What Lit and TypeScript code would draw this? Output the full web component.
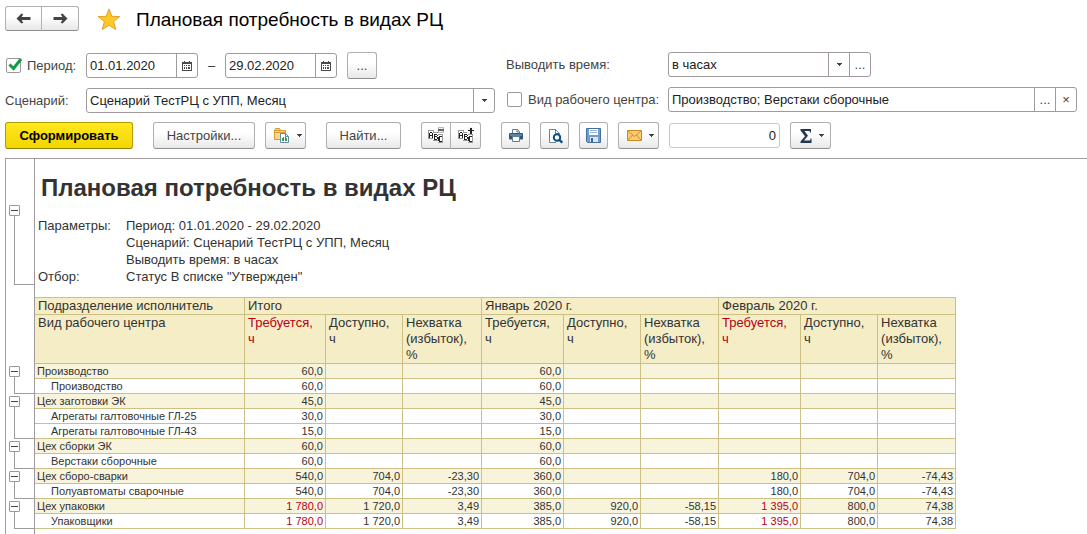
import { LitElement, html, svg, css, nothing } from "lit";
import { customElement, state } from "lit/decorators.js";
import { classMap } from "lit/directives/class-map.js";

interface Row {
  name: string;
  values: string[];
  red?: number[];
}

const COLUMNS = ["Требуется, ч", "Доступно, ч", "Нехватка (избыток), %"];
const PERIODS = [
  { title: "Итого", over: true },
  { title: "Январь 2020 г.", over: false },
  { title: "Февраль 2020 г.", over: true },
];
const WIDTHS = [30, 210, 81, 77, 79, 82, 77, 78, 82, 77, 78];

const only = (v: string) => [v, "", "", v, "", "", "", "", ""];
const WELD = ["540,0", "704,0", "-23,30", "360,0", "", "", "180,0", "704,0", "-74,43"];
const PACK = ["1 780,0", "1 720,0", "3,49", "385,0", "920,0", "-58,15", "1 395,0", "800,0", "74,38"];

const GROUPS: Row[][] = [
  [
    { name: "Производство", values: only("60,0") },
    { name: "Производство", values: only("60,0") },
  ],
  [
    { name: "Цех заготовки ЭК", values: only("45,0") },
    { name: "Агрегаты галтовочные ГЛ-25", values: only("30,0") },
    { name: "Агрегаты галтовочные ГЛ-43", values: only("15,0") },
  ],
  [
    { name: "Цех сборки ЭК", values: only("60,0") },
    { name: "Верстаки сборочные", values: only("60,0") },
  ],
  [
    { name: "Цех сборо-сварки", values: WELD },
    { name: "Полуавтоматы сварочные", values: WELD },
  ],
  [
    { name: "Цех упаковки", values: PACK, red: [0, 6] },
    { name: "Упаковщики", values: PACK, red: [0, 6] },
  ],
];

const caret = html`<svg class="caret" width="5" height="3" viewBox="0 0 5 3"><path d="M0 0h5v1h-1v1h-1v1h-1v-1h-1v-1h-1z" fill="#444"/></svg>`;

const calendar = html`<svg width="10" height="10" viewBox="0 0 10 10" shape-rendering="crispEdges">
  <path d="M2 0h1v1h4v-1h1v1h2v9h-10v-9h2z" fill="#4a4a4a"/>
  <path d="M1 3h8v6h-8z" fill="#fff"/>
  <path d="M2 4h1v1h-1zM4 4h1v1h-1zM6 4h2v1h-2zM2 6h1v2h-1zM4 6h1v2h-1zM6 6h2v2h-2z" fill="#4a4a4a"/>
</svg>`;

const arrow = (right: boolean) => html`<svg width="15" height="11" viewBox="0 0 15 11">
  <g transform=${right ? "translate(15 0) scale(-1 1)" : "translate(0 0)"}>
    <path d="M0.5 5.5 5.5 0.5 7.3 1.2 5.6 4H14.5V7H5.6L7.3 9.8 5.500 10.500Z" fill="#444"/>
  </g></svg>`;

const star = html`<svg width="24" height="23" viewBox="0 0 24 23">
  <path d="M12 1 14.8 8.3 22.8 8.6 16.6 13.6 18.8 21.6 12 17.2 5.2 21.6 7.4 13.6 1.2 8.6 9.2 8.3Z" fill="#fdc724" stroke="#dfa32c" stroke-width="1"/>
</svg>`;

const folderIcon = html`<svg width="17" height="17" viewBox="0 0 17 17">
  <path d="M1.5 12.5V3.5L2.5 1.5H6.5L7.5 3.5H12.5V5.5" fill="#f6cf7c" stroke="#d99a32"/>
  <path d="M1.5 12.5V3.5H12.5V12.5Z" fill="#f9d98f" stroke="#d99a32"/>
  <path d="M1.5 5.5H12" stroke="#d99a32"/>
  <path d="M7.5 6.5H12.5L15.5 9.5V15.5H7.5Z" fill="#fff" stroke="#6b86a4"/>
  <path d="M12.5 6.5V9.5H15.5" fill="none" stroke="#6b86a4"/>
  <path d="M9 11h1v3h-1zM13 11h1v3h-1z" fill="#3fa45b"/><path d="M10 10h1v4h-1zM12 10h1v4h-1z" fill="#e03a3a"/>
</svg>`;

const groupIcon = (plus: boolean) => html`<svg width="16" height="17" viewBox="0 0 16 17" shape-rendering="crispEdges">
  <path d="M0 3h6v9h-6z" fill="#999"/><path d="M1 4h4v7h-4z" fill="#fff"/>
  <path d="M2 5h2v1h1v5h-1v-2h-2v2h-1v-5h1zM2 6v2h2v-2z" fill="#222" fill-rule="evenodd"/>
  <path d="M5 5h5v9h-5z" fill="#999"/><path d="M5 6h5v7h-5z" fill="#fff"/>
  <path d="M6 7h3v1h1v1h-1v1h1v2h-1v1h-3zM7 8v1h2v-1zM7 10v2h2v-2z" fill="#222" fill-rule="evenodd"/>
  <path d="M10 7h5v9h-5z" fill="#999"/><path d="M10 8h4v7h-4z" fill="#fff"/>
  <path d="M11 9h3v1h-2v4h2v1h-3v-1h-1v-4h1z" fill="#222"/>
  ${plus
    ? svg`<path d="M9 0h7v7h-7z" fill="#f6f6f6"/><path d="M10 3h2v-2h1v2h3v1h-3v3h-1v-3h-2z" fill="#222"/><path d="M12 1h2v6h-2z" fill="#222"/>`
    : svg`<path d="M10 0h6v6h-6z" fill="#bbb"/><path d="M11 1h4v4h-4z" fill="#eee"/><path d="M10 2h6v2h-6z" fill="#666"/>`}
</svg>`;

const printIcon = html`<svg width="16" height="15" viewBox="0 0 16 15">
  <path d="M4.500 5V1.500H9.500L11.500 3.500V5" fill="#fff" stroke="#5d7d99"/>
  <path d="M9 1.500V4H11.500" fill="none" stroke="#5d7d99"/>
  <rect x="1" y="5" width="14" height="6.500" rx="1" fill="#2f587b"/>
  <path d="M2 7H14" stroke="#8fb0c8"/>
  <path d="M4.500 8.500H11.500V13.500H4.500Z" fill="#fff" stroke="#5d7d99"/>
</svg>`;

const previewIcon = html`<svg width="16" height="16" viewBox="0 0 16 16">
  <path d="M9 14.500H2.500V1.500H8.500L12.500 5.500V6" fill="#fff" stroke="#6c8299"/>
  <path d="M8.500 1.500V5.500H12.500" fill="none" stroke="#6c8299"/>
  <circle cx="10" cy="9.500" r="3.200" fill="#fff" stroke="#0d4f7e" stroke-width="2"/>
  <path d="M12 11.500 15.200 14.700" stroke="#0d4f7e" stroke-width="2.400"/>
</svg>`;

const saveIcon = html`<svg width="15" height="15" viewBox="0 0 15 15">
  <path d="M.500.500H14.500V14.500H1.500L.500 13.500Z" fill="#6f9dd3" stroke="#44719f"/>
  <path d="M3 1H12V7H3Z" fill="#fff"/><path d="M4 2.500H11M4 4.500H11" stroke="#9fb9d4"/>
  <path d="M4 9H12V14H4Z" fill="#dfe5ea"/><path d="M5 10H7V14H5Z" fill="#34679f"/>
</svg>`;

const mailIcon = html`<svg width="15" height="11" viewBox="0 0 15 11">
  <path d="M.500.500H14.500V10.500H.500Z" fill="#fbcc72" stroke="#cf8a26"/>
  <path d="M1 1 7.500 6.500 14 1M1 10 5.500 5M14 10 9.500 5" fill="none" stroke="#cf8a26"/>
</svg>`;

const sigmaIcon = html`<svg width="12" height="14" viewBox="0 0 12 14">
  <path d="M0.500 0H11V3.500H10L9.500 2H4.500L8 6.700 4 11.500H10L10.700 9.500H11.500V14H0.500V12.500L5 7.200 0.500 1.500Z" fill="#22394f"/>
</svg>`;

const tick = html`<svg class="tick" width="15" height="13" viewBox="0 0 15 13"><path d="M1.500 6.500 5.500 10.500 13 1" fill="none" stroke="#0f9a4a" stroke-width="3"/></svg>`;

@customElement("app-root")
export class AppRoot extends LitElement {
  static styles = css`
    :host {
      display: flex;
      flex-direction: column;
      min-height: 100vh;
      box-sizing: border-box;
      padding: 6px 0 0 5px;
      background: #fff;
      color: #333;
      font: 13px/15px "Liberation Sans", Arial, sans-serif;
    }
    *, *::before { box-sizing: border-box; }
    button, input, select { font: inherit; color: inherit; margin: 0; padding: 0; }
    h1, h2, dl, dd { margin: 0; font-weight: normal; }
    svg { display: block; flex: none; }

    .head { display: flex; align-items: center; height: 27px; }
    .joined { display: flex; }
    .btn {
      display: flex;
      align-items: center;
      justify-content: center;
      height: 27px;
      min-width: 29px;
      border: 1px solid #b0b0b0;
      border-bottom-color: #8f8f8f;
      border-radius: 3px;
      background: linear-gradient(#fff 40%, #e8e8e8);
      color: #444;
    }
    .joined .btn { width: 30px; }
    .joined .btn:first-child { border-radius: 3px 0 0 3px; }
    .joined .btn:last-child { border-radius: 0 3px 3px 0; border-left: 0; }
    .nav { align-self: flex-start; }
    .nav .btn { width: 37px; height: 25px; }
    .star { margin: 0 15px 0 18px; border: 0; background: none; }
    .title { font-size: 19px; line-height: 24px; color: #000; }

    .form {
      display: grid;
      grid-template-columns: 490fr 571fr;
      gap: 11px;
      margin: 19px 10px 0 0;
    }
    .side { display: flex; flex-direction: column; gap: 10px; }
    .first { padding-top: 1px; }
    .line { display: flex; align-items: center; height: 25px; }
    .cap { display: flex; align-items: center; flex: none; width: 81px; gap: 6px; color: #444; }
    .cap.wide { width: 162px; }
    .tickbox { position: relative; flex: none; width: 15px; height: 15px; margin-left: 1px; }
    .tickbox input {
      display: block;
      appearance: none;
      width: 15px;
      height: 15px;
      border: 1px solid #999;
      border-radius: 2px;
      background: #fff;
    }
    .tick { position: absolute; left: 2px; top: 0; pointer-events: none; display: none; }
    .tickbox input:checked + .tick { display: block; }

    .field {
      display: flex;
      height: 25px;
      border: 1px solid #a09a9e;
      border-radius: 3px;
      background: #fff;
      color: #222;
      overflow: hidden;
    }
    .field input {
      flex: 1;
      min-width: 0;
      border: 0;
      padding: 0 3px;
      background: none;
      outline: none;
    }
    .field button {
      display: flex;
      align-items: center;
      justify-content: center;
      width: 21px;
      border: 0;
      border-left: 1px solid #a09a9e;
      background: none;
      color: #444;
    }
    .date { width: 112px; }
    .grow { flex: 1; }
    .time { width: 203px; }
    .dash { width: 27px; text-align: center; }
    .more { width: 30px; margin-left: 10px; }
    .pick { flex: 1; display: grid; grid-template-columns: 1fr 21px; min-width: 0; }
    .pick select {
      grid-area: 1 / 1 / 2 / 3;
      appearance: none;
      border: 0;
      padding: 0 24px 0 3px;
      background: none;
      outline: none;
    }
    .pick .drop {
      grid-area: 1 / 2;
      display: flex;
      align-items: center;
      justify-content: center;
      border-left: 1px solid #a09a9e;
      pointer-events: none;
    }

    .tools { display: flex; margin-top: 9px; gap: 10px; }
    .tools .after { margin-right: 10px; }
    .menu { width: 41px; gap: 7px; padding-left: 3px; }
    .primary {
      width: 128px;
      border-color: #b39b00;
      border-bottom-color: #8f7c00;
      background: linear-gradient(#ffe81f, #f2d600);
      color: #000;
      font-weight: bold;
    }
    .settings { width: 102px; }
    .find { width: 75px; }
    .count { width: 111px; border-color: #c8c8c8; align-self: center; }
    .count input { text-align: right; }

    .report {
      flex: 1;
      margin-top: 9px;
      border-top: 1px solid #a09a9e;
      border-left: 1px solid #a09a9e;
      background: linear-gradient(#a09a9e, #a09a9e) 28px 0 / 1px 100% no-repeat;
    }
    .summary { display: flex; height: 138px; }
    .gutter { display: flex; flex: none; width: 29px; padding: 46px 1px 12px 3px; }
    .bracket { display: flex; flex-direction: column; flex: 1; }
    .fold {
      flex: none;
      width: 11px;
      height: 11px;
      border: 1px solid #999;
      border-radius: 1px;
      background: linear-gradient(#444, #444) center / 7px 1px no-repeat #fff;
    }
    .stem { flex: 1; margin-left: 5px; border-left: 1px solid #a09a9e; border-bottom: 1px solid #a09a9e; }
    .intro { padding: 15px 0 0 3px; }
    .name { padding-left: 3px; font-size: 24px; line-height: 28px; font-weight: bold; }
    .params { display: grid; grid-template-columns: 88px auto; margin-top: 15px; line-height: 17px; }
    .params dd { grid-column: 2; }

    table { border-collapse: separate; border-spacing: 0; table-layout: fixed; width: 950px; }
    th, td { padding: 0; font-weight: normal; }
    .h {
      border-right: 1px solid #ccc085;
      border-bottom: 1px solid #ccc085;
      background: #f5edc6;
      padding: 0 3px;
      text-align: left;
      vertical-align: top;
      line-height: 16px;
    }
    .top { height: 18px; border-top: 1px solid #ccc085; }
    .low { height: 49px; }
    .over { color: #b80014; }
    .c {
      height: 15px;
      border-right: 1px solid #ccc085;
      border-bottom: 1px solid #ccc085;
      font-size: 11px;
      line-height: 14px;
      text-align: right;
      padding-right: 2px;
      white-space: nowrap;
    }
    .label { text-align: left; padding-left: 2px; }
    .child { padding-left: 16px; }
    .group .c { background: #f8f4dc; }
    .g { height: 1px; vertical-align: top; }
    .g .bracket { height: 100%; padding: 2px 1px 0 3px; }
  `;

  @state() private closed = new Set<number>();

  private toggle(i: number) {
    const next = new Set(this.closed);
    next.has(i) ? next.delete(i) : next.add(i);
    this.closed = next;
  }

  private row(row: Row, parent: boolean, span: number, index: number) {
    return html`<tr class=${classMap({ group: parent })}>
      ${parent
        ? html`<td class="g" rowspan=${span}><div class="bracket">
            <button class="fold" aria-label="Свернуть" @click=${() => this.toggle(index)}></button>
            ${span > 1 ? html`<div class="stem"></div>` : nothing}
          </div></td>`
        : nothing}
      <th scope="row" class=${classMap({ c: true, label: true, child: !parent })}>${row.name}</th>
      ${row.values.map((v, i) => html`<td class=${classMap({ c: true, over: !!row.red?.includes(i) })}>${v}</td>`)}
    </tr>`;
  }

  render() {
    return html`
      <header class="head">
        <div class="joined nav">
          <button class="btn" aria-label="Назад">${arrow(false)}</button>
          <button class="btn" aria-label="Вперед">${arrow(true)}</button>
        </div>
        <button class="star" aria-label="Избранное">${star}</button>
        <h1 class="title">Плановая потребность в видах РЦ</h1>
      </header>

      <section class="form">
        <div class="side first">
          <div class="line">
            <div class="cap">
              <span class="tickbox"><input id="period" type="checkbox" checked />${tick}</span>
              <label for="period">Период:</label>
            </div>
            <div class="field date"><input aria-label="Начало периода" value="01.01.2020" /><button aria-label="Календарь">${calendar}</button></div>
            <span class="dash">–</span>
            <div class="field date"><input aria-label="Конец периода" value="29.02.2020" /><button aria-label="Календарь">${calendar}</button></div>
            <button class="btn more" aria-label="Выбрать период">...</button>
          </div>
          <div class="line">
            <label class="cap" for="scenario">Сценарий:</label>
            <div class="field grow">
              <div class="pick">
                <select id="scenario"><option>Сценарий ТестРЦ с УПП, Месяц</option></select>
                <span class="drop">${caret}</span>
              </div>
            </div>
          </div>
        </div>
        <div class="side">
          <div class="line">
            <label class="cap wide" for="time">Выводить время:</label>
            <div class="field time">
              <div class="pick">
                <select id="time"><option>в часах</option></select>
                <span class="drop">${caret}</span>
              </div>
              <button aria-label="Выбрать">...</button>
            </div>
          </div>
          <div class="line">
            <div class="cap wide">
              <span class="tickbox"><input id="usecenter" type="checkbox" />${tick}</span>
              <label for="usecenter">Вид рабочего центра:</label>
            </div>
            <div class="field grow">
              <input aria-label="Вид рабочего центра" value="Производство; Верстаки сборочные" />
              <button aria-label="Выбрать">...</button>
              <button aria-label="Очистить">×</button>
            </div>
          </div>
        </div>
      </section>

      <div class="tools">
        <button class="btn primary after">Сформировать</button>
        <button class="btn settings">Настройки...</button>
        <button class="btn menu after" aria-label="Варианты отчета">${folderIcon}${caret}</button>
        <button class="btn find after">Найти...</button>
        <div class="joined after">
          <button class="btn" aria-label="Свернуть группы">${groupIcon(false)}</button>
          <button class="btn" aria-label="Развернуть группы">${groupIcon(true)}</button>
        </div>
        <button class="btn" aria-label="Печать">${printIcon}</button>
        <button class="btn" aria-label="Просмотр">${previewIcon}</button>
        <button class="btn" aria-label="Сохранить">${saveIcon}</button>
        <button class="btn menu" aria-label="Отправить">${mailIcon}${caret}</button>
        <div class="field count"><input aria-label="Сумма" value="0" /></div>
        <button class="btn menu" aria-label="Показатели">${sigmaIcon}${caret}</button>
      </div>

      <main class="report">
        <div class="summary">
          <div class="gutter"><div class="bracket"><button class="fold" aria-label="Свернуть"></button><div class="stem"></div></div></div>
          <div class="intro">
            <h2 class="name">Плановая потребность в видах РЦ</h2>
            <dl class="params">
              <dt>Параметры:</dt>
              <dd>Период: 01.01.2020 - 29.02.2020</dd>
              <dd>Сценарий: Сценарий ТестРЦ с УПП, Месяц</dd>
              <dd>Выводить время: в часах</dd>
              <dt>Отбор:</dt>
              <dd>Статус В списке "Утвержден"</dd>
            </dl>
          </div>
        </div>
        <table>
          <colgroup>${WIDTHS.map((w, i) => html`<col style="width:${i ? w : w - 1}px" />`)}</colgroup>
          <thead>
            <tr>
              <td rowspan="2"></td>
              <th class="h top" scope="col">Подразделение исполнитель</th>
              ${PERIODS.map((p) => html`<th class="h top" colspan="3" scope="colgroup">${p.title}</th>`)}
            </tr>
            <tr>
              <th class="h low" scope="col">Вид рабочего центра</th>
              ${PERIODS.map((p) =>
                COLUMNS.map((c, i) => html`<th scope="col" class=${classMap({ h: true, low: true, over: p.over && i === 0 })}>${c}</th>`)
              )}
            </tr>
          </thead>
          <tbody>
            ${GROUPS.map((g, gi) => {
              const rows = this.closed.has(gi) ? g.slice(0, 1) : g;
              return rows.map((r, i) => this.row(r, i === 0, rows.length, gi));
            })}
          </tbody>
        </table>
      </main>
    `;
  }
}
